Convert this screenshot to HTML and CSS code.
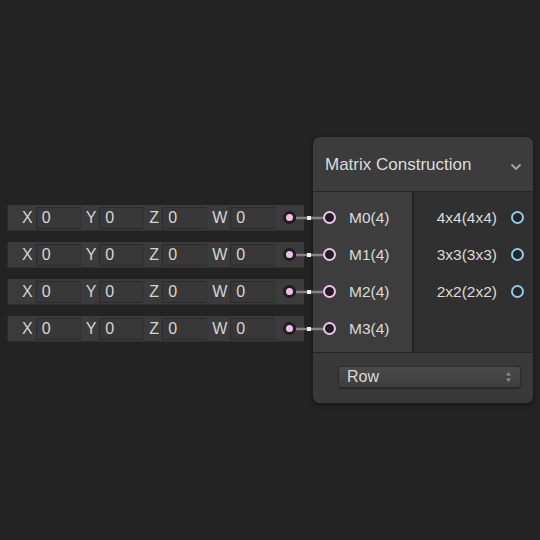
FILE: index.html
```html
<!DOCTYPE html>
<html>
<head>
<meta charset="utf-8">
<link rel="stylesheet" href="styles.css">
</head>
<body>
<div class="canvas">
  <div class="vectors">
    <div class="vrow"><span class="lbl">X</span><span class="fld">0</span><span class="lbl">Y</span><span class="fld">0</span><span class="lbl">Z</span><span class="fld">0</span><span class="lbl">W</span><span class="fld">0</span><span class="dot"></span></div>
    <div class="vrow"><span class="lbl">X</span><span class="fld">0</span><span class="lbl">Y</span><span class="fld">0</span><span class="lbl">Z</span><span class="fld">0</span><span class="lbl">W</span><span class="fld">0</span><span class="dot"></span></div>
    <div class="vrow"><span class="lbl">X</span><span class="fld">0</span><span class="lbl">Y</span><span class="fld">0</span><span class="lbl">Z</span><span class="fld">0</span><span class="lbl">W</span><span class="fld">0</span><span class="dot"></span></div>
    <div class="vrow"><span class="lbl">X</span><span class="fld">0</span><span class="lbl">Y</span><span class="fld">0</span><span class="lbl">Z</span><span class="fld">0</span><span class="lbl">W</span><span class="fld">0</span><span class="dot"></span></div>
  </div>

  <div class="node">
    <div class="header">
      <span class="title">Matrix Construction</span>
      <svg class="chev" width="12" height="8" viewBox="0 0 12 8"><path d="M1.5 1.5 L6 6 L10.5 1.5" fill="none" stroke="#a8a8a8" stroke-width="1.8"/></svg>
    </div>
    <div class="body">
      <div class="inputs">
        <div class="port-row"><span class="port in"></span><span class="plabel">M0(4)</span></div>
        <div class="port-row"><span class="port in"></span><span class="plabel">M1(4)</span></div>
        <div class="port-row"><span class="port in"></span><span class="plabel">M2(4)</span></div>
        <div class="port-row"><span class="port in"></span><span class="plabel">M3(4)</span></div>
      </div>
      <div class="outputs">
        <div class="port-row out-row"><span class="plabel">4x4(4x4)</span><span class="port out"></span></div>
        <div class="port-row out-row"><span class="plabel">3x3(3x3)</span><span class="port out"></span></div>
        <div class="port-row out-row"><span class="plabel">2x2(2x2)</span><span class="port out"></span></div>
      </div>
    </div>
    <div class="footer">
      <div class="select">
        <span>Row</span>
        <svg width="7" height="12" viewBox="0 0 7 12"><path d="M3.5 1 L6 4.5 L1 4.5 Z M3.5 11 L6 7.5 L1 7.5 Z" fill="#8a8a8a"/></svg>
      </div>
    </div>
  </div>

  <svg class="wires" width="540" height="540" viewBox="0 0 540 540">
    <g stroke="#8c8088" stroke-width="2.5">
      <line x1="296" y1="218" x2="323" y2="218"/>
      <line x1="296" y1="255" x2="323" y2="255"/>
      <line x1="296" y1="292" x2="323" y2="292"/>
      <line x1="296" y1="329" x2="323" y2="329"/>
    </g>
    <g fill="#f2eef2">
      <rect x="307" y="216" width="4" height="4"/>
      <rect x="307" y="253" width="4" height="4"/>
      <rect x="307" y="290" width="4" height="4"/>
      <rect x="307" y="327" width="4" height="4"/>
    </g>
  </svg>
</div>
</body>
</html>
```

FILE: styles.css
```css
html, body {
  margin: 0;
  padding: 0;
  background: #232323;
}
body {
  font-family: "Liberation Sans", Arial, sans-serif;
  color: #d9d9d9;
}
.canvas {
  position: relative;
  width: 540px;
  height: 540px;
  overflow: hidden;
  background: #232323;
}
.vectors {
  position: absolute;
  left: 7px;
  top: 205px;
  display: flex;
  flex-direction: column;
  gap: 11px;
}
.vrow {
  width: 297px;
  height: 26px;
  box-sizing: border-box;
  background: #3b3b3b;
  border-left: 1px solid #2c2c2c;
  border-bottom: 1px solid #2e2e2e;
  display: flex;
  align-items: center;
  padding-left: 14px;
  font-size: 16px;
}
.lbl {
  color: #d4d4d4;
  margin-right: 3px;
}
.fld {
  width: 45px;
  height: 22px;
  box-sizing: border-box;
  background: #383838;
  border: 1px solid #2a2a2a;
  border-right-color: #333;
  padding-left: 5px;
  line-height: 20px;
  color: #d6d6d6;
  margin-right: 5px;
}
.vrow .fld:nth-of-type(3) {
  margin-right: 3px;
}
.dot {
  margin-left: auto;
  margin-right: 8px;
  width: 13px;
  height: 13px;
  box-sizing: border-box;
  border-radius: 50%;
  background: #f2bdeb;
  border: 3.5px solid #1e1e1e;
}
.wires {
  position: absolute;
  left: 0;
  top: 0;
  pointer-events: none;
  z-index: 2;
}
.node {
  position: absolute;
  left: 313px;
  top: 137px;
  width: 220px;
  height: 266px;
  border-radius: 7px;
  overflow: hidden;
  display: flex;
  flex-direction: column;
  box-shadow: 0 0 0 1px #1c1c1c, 0 2px 4px rgba(0,0,0,0.4);
  background: #3a3a3a;
  z-index: 1;
}
.header {
  height: 55px;
  flex: none;
  box-sizing: border-box;
  background: #3c3c3c;
  border-bottom: 1px solid #262626;
  display: flex;
  align-items: center;
  padding: 0 11px 0 12px;
}
.title {
  font-size: 17px;
  color: #dcdcdc;
  flex: 1;
  margin-top: 1px;
}
.chev {
  margin-top: 5px;
}
.body {
  height: 160px;
  flex: none;
  display: flex;
}
.inputs {
  width: 99px;
  background: #3d3d3d;
  border-right: 2px solid #242424;
  box-sizing: content-box;
  padding-top: 7px;
  display: flex;
  flex-direction: column;
}
.outputs {
  flex: 1;
  background: #303030;
  padding-top: 7px;
  display: flex;
  flex-direction: column;
}
.port-row {
  height: 37px;
  display: flex;
  align-items: center;
  font-size: 15.5px;
  color: #dadada;
  padding-left: 11px;
}
.out-row {
  justify-content: flex-end;
  padding-left: 0;
  padding-right: 10px;
}
.port {
  width: 13px;
  height: 13px;
  box-sizing: border-box;
  border-radius: 50%;
  background: #1f1f1f;
  border: 2px solid #f4c2ee;
}
.port.in {
  margin-left: -1px;
  margin-right: 13px;
}
.port.out {
  border-color: #8ccdef;
  margin-left: 14px;
  margin-right: -1px;
  background: #262626;
}
.footer {
  flex: 1;
  background: #393939;
  border-top: 1px solid #262626;
  display: flex;
  align-items: center;
  padding-left: 25px;
  padding-bottom: 2px;
}
.select {
  width: 183px;
  height: 22px;
  box-sizing: border-box;
  border-radius: 3px;
  background: linear-gradient(#4a4a4a, #3e3e3e);
  border: 1px solid #2c2c2c;
  box-shadow: 0 1px 1px rgba(0,0,0,0.35);
  display: flex;
  align-items: center;
  justify-content: space-between;
  padding: 0 8px 0 8px;
  font-size: 16px;
  color: #dadada;
}
```
